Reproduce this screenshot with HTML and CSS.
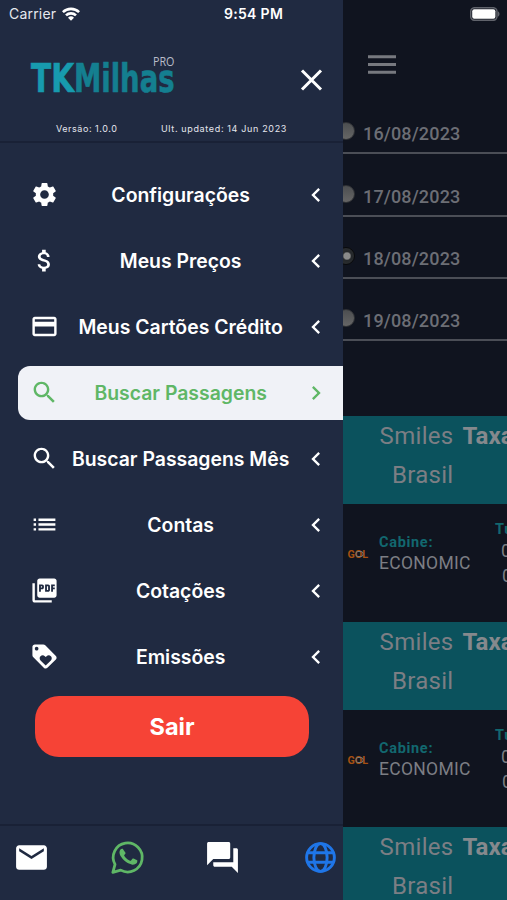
FILE: index.html
```html
<!DOCTYPE html>
<html lang="pt-BR">
<head>
<meta charset="utf-8">
<title>TKMilhas PRO</title>
<link rel="stylesheet" href="styles.css">
</head>
<body>
<div class="phone">
  <div class="status">
    <span class="carrier">Carrier</span>
    <svg class="wifi" viewBox="0 0 18 14"><g fill="none" stroke="#fff" stroke-width="2.6"><path d="M.9 5.2a11.5 11.5 0 0 1 16.2 0"/><path d="M4 8.4a7.1 7.1 0 0 1 10 0"/></g><path fill="#fff" d="M9 13.8 6 10.7a4.3 4.3 0 0 1 6 0z"/></svg>
    <span class="time">9:54 PM</span>
    <svg class="battery" viewBox="0 0 30 14"><rect x=".7" y=".7" width="26.3" height="12.6" rx="4" fill="none" stroke="#60636b" stroke-width="1.5"/><path d="M28 4.5c2 .6 2 4.400 0 5z" fill="#60636b"/><rect x="2.200" y="2.200" width="23.200" height="9.600" rx="2" fill="#fff"/></svg>
  </div>

  <aside class="drawer">
    <header class="head">
      <div class="brand">
        <svg class="logo" viewBox="0 0 146 44">
          <text class="logo-tk" x="0" y="39.700" textLength="43" lengthAdjust="spacingAndGlyphs">TK</text>
          <text class="logo-milhas" x="43" y="39.700" textLength="100.500" lengthAdjust="spacingAndGlyphs">Milhas</text>
          <text class="logo-pro" x="122" y="14.300" textLength="21.500" lengthAdjust="spacingAndGlyphs">PRO</text>
        </svg>
        <svg class="close" viewBox="0 0 24 24"><path d="M3 2.500l19 19M22 2.500l-19 19"/></svg>
      </div>
      <div class="version"><span class="v1">Versão: 1.0.0</span><span class="v2">Ult. updated: 14 Jun 2023</span></div>
    </header>

    <nav class="menu">
      <a class="item"><svg class="icon" viewBox="0 0 24 24"><path d="M19.140 12.940c.04-.3.060-.610.060-.940 0-.320-.020-.640-.070-.940l2.030-1.580c.180-.140.230-.410.120-.610l-1.920-3.320c-.120-.220-.370-.290-.590-.220l-2.390.960c-.500-.380-1.030-.700-1.620-.940l-.360-2.540c-.040-.240-.240-.410-.480-.410h-3.840c-.240 0-.430.170-.470.410l-.360 2.540c-.590.240-1.130.570-1.620.940l-2.390-.960c-.220-.080-.470 0-.590.220L2.740 8.870c-.120.210-.080.470.120.610l2.030 1.580c-.050.300-.090.630-.090.940s.020.640.070.940l-2.030 1.580c-.180.140-.230.410-.120.610l1.920 3.320c.120.220.370.290.590.220l2.390-.960c.500.380 1.030.700 1.620.940l.360 2.540c.050.240.240.410.480.410h3.840c.240 0 .440-.170.470-.410l.360-2.540c.590-.240 1.130-.560 1.620-.940l2.390.960c.220.080.470 0 .590-.220l1.920-3.320c.120-.220.070-.470-.120-.610l-2.010-1.580zM12 15.600c-1.980 0-3.600-1.620-3.600-3.600s1.620-3.600 3.600-3.600 3.600 1.620 3.600 3.600-1.620 3.600-3.600 3.600z"/></svg><span>Configurações</span><svg class="chev" viewBox="0 0 24 24"><path d="M15.410 7.410L14 6l-6 6 6 6 1.410-1.410L10.830 12z"/></svg></a>
      <a class="item"><svg class="icon" viewBox="0 0 24 24"><path d="M11.800 10.900c-2.270-.59-3-1.200-3-2.150 0-1.090 1.010-1.850 2.700-1.850 1.780 0 2.440.85 2.500 2.100h2.210c-.07-1.720-1.120-3.300-3.210-3.810V3h-3v2.160c-1.940.42-3.500 1.680-3.500 3.610 0 2.310 1.910 3.460 4.700 4.130 2.500.6 3 1.480 3 2.410 0 .69-.49 1.790-2.700 1.790-2.060 0-2.870-.92-2.980-2.100h-2.200c.12 2.190 1.760 3.420 3.680 3.830V21h3v-2.150c1.950-.37 3.500-1.500 3.500-3.550 0-2.840-2.430-3.810-4.700-4.400z"/></svg><span>Meus Preços</span><svg class="chev" viewBox="0 0 24 24"><path d="M15.410 7.410L14 6l-6 6 6 6 1.410-1.410L10.830 12z"/></svg></a>
      <a class="item"><svg class="icon" viewBox="0 0 24 24"><path d="M20 4H4c-1.110 0-1.990.89-1.990 2L2 18c0 1.110.89 2 2 2h16c1.110 0 2-.89 2-2V6c0-1.110-.89-2-2-2zm0 14H4v-6h16v6zm0-10H4V6h16v2z"/></svg><span>Meus Cartões Crédito</span><svg class="chev" viewBox="0 0 24 24"><path d="M15.410 7.410L14 6l-6 6 6 6 1.410-1.410L10.830 12z"/></svg></a>
      <a class="item active"><svg class="icon" viewBox="0 0 24 24"><path d="M15.500 14h-.79l-.28-.27C15.410 12.590 16 11.110 16 9.500 16 5.910 13.090 3 9.500 3S3 5.910 3 9.500 5.910 16 9.500 16c1.610 0 3.090-.59 4.230-1.570l.27.28v.79l5 4.990L20.490 19l-4.990-5zm-6 0C7.010 14 5 11.990 5 9.500S7.010 5 9.500 5 14 7.010 14 9.500 11.990 14 9.500 14z"/></svg><span>Buscar Passagens</span><svg class="chev" viewBox="0 0 24 24"><path d="M10 6L8.590 7.410 13.170 12l-4.580 4.590L10 18l6-6z"/></svg></a>
      <a class="item"><svg class="icon" viewBox="0 0 24 24"><path d="M15.500 14h-.79l-.28-.27C15.410 12.590 16 11.110 16 9.500 16 5.910 13.090 3 9.500 3S3 5.910 3 9.500 5.910 16 9.500 16c1.610 0 3.090-.59 4.230-1.570l.27.28v.79l5 4.990L20.490 19l-4.990-5zm-6 0C7.010 14 5 11.990 5 9.500S7.010 5 9.500 5 14 7.010 14 9.500 11.990 14 9.500 14z"/></svg><span>Buscar Passagens Mês</span><svg class="chev" viewBox="0 0 24 24"><path d="M15.410 7.410L14 6l-6 6 6 6 1.410-1.410L10.830 12z"/></svg></a>
      <a class="item"><svg class="icon" viewBox="0 0 24 24"><path d="M3 13h2v-2H3v2zm0 4h2v-2H3v2zm0-8h2V7H3v2zm4 4h14v-2H7v2zm0 4h14v-2H7v2zM7 7v2h14V7H7z"/></svg><span>Contas</span><svg class="chev" viewBox="0 0 24 24"><path d="M15.410 7.410L14 6l-6 6 6 6 1.410-1.410L10.830 12z"/></svg></a>
      <a class="item"><svg class="icon" viewBox="0 0 24 24"><path d="M20 2H8c-1.100 0-2 .9-2 2v12c0 1.100.9 2 2 2h12c1.100 0 2-.9 2-2V4c0-1.100-.9-2-2-2zm-8.500 7.500c0 .83-.67 1.500-1.500 1.500H9v2H7.500V7H10c.83 0 1.500.67 1.500 1.500v1zm5 2c0 .83-.67 1.500-1.500 1.500h-2.500V7H15c.83 0 1.500.67 1.500 1.500v3zm4-3H19v1h1.500V11H19v2h-1.500V7h3v1.500zM9 9.500h1v-1H9v1zM4 6H2v14c0 1.100.9 2 2 2h14v-2H4V6zm10 5.500h1v-3h-1v3z"/></svg><span>Cotações</span><svg class="chev" viewBox="0 0 24 24"><path d="M15.410 7.410L14 6l-6 6 6 6 1.410-1.410L10.830 12z"/></svg></a>
      <a class="item"><svg class="icon" viewBox="0 0 24 24"><path d="M21.410 11.580l-9-9C12.050 2.220 11.550 2 11 2H4c-1.100 0-2 .9-2 2v7c0 .55.220 1.050.590 1.420l9 9c.360.360.860.580 1.410.580s1.050-.220 1.410-.590l7-7c.370-.360.590-.860.590-1.410s-.230-1.060-.590-1.420zM5.500 7C4.670 7 4 6.330 4 5.500S4.670 4 5.500 4 7 4.670 7 5.500 6.330 7 5.500 7zm11.770 8.270L13 19.540l-4.270-4.270C8.280 14.810 8 14.190 8 13.500c0-1.380 1.120-2.500 2.500-2.500.69 0 1.320.28 1.770.74l.73.72.73-.73c.450-.450 1.080-.730 1.770-.730 1.380 0 2.500 1.120 2.500 2.500 0 .69-.280 1.320-.730 1.770z"/></svg><span>Emissões</span><svg class="chev" viewBox="0 0 24 24"><path d="M15.410 7.410L14 6l-6 6 6 6 1.410-1.410L10.830 12z"/></svg></a>
    </nav>
    <button class="exit">Sair</button>

    <footer class="foot">
      <svg viewBox="0 0 24 24" fill="#fff"><path d="M20 4H4c-1.100 0-1.990.9-1.990 2L2 18c0 1.100.9 2 2 2h16c1.100 0 2-.9 2-2V6c0-1.100-.9-2-2-2zm0 4l-8 5-8-5V6l8 5 8-5v2z"/></svg>
      <svg viewBox="0 0 24 24"><path d="M2.500 21.600l1.400-5.100a9.400 9.400 0 1 1 3.700 3.700z" fill="none" stroke="#5fb766" stroke-width="1.800" stroke-linejoin="round"/><path fill="#5fb766" d="M9.300 6.900c-.3-.5-.5-.5-.8-.5-.9 0-1.700 1-1.700 2.300 0 1.400 1 2.700 1.200 2.900.1.200 2 3.100 4.900 4.300 2.400 1 2.900.8 3.400.7.500 0 1.700-.7 1.900-1.300.2-.7.200-1.200.2-1.300-.1-.2-.3-.3-2.500-1.300-.3-.1-.5-.1-.7.100l-.9 1.200c-.2.200-.4.200-.7.100-2.200-1-3.400-2.600-3.700-3.200-.2-.3 0-.5.800-1.500.1-.2 0-.4 0-.5z"/></svg>
      <svg viewBox="0 0 24 24" fill="#fff"><path d="M21 6h-2v9H6v2c0 .55.45 1 1 1h11l4 4V7c0-.55-.45-1-1-1zm-4 6V3c0-.55-.45-1-1-1H3c-.55 0-1 .45-1 1v14l4-4h10c.55 0 1-.45 1-1z"/></svg>
      <svg viewBox="0 0 24 24" fill="none" stroke="#1f76e8" stroke-width="1.900"><circle cx="12" cy="12" r="9"/><ellipse cx="12" cy="12" rx="4.300" ry="9"/><path d="M3.800 8.900h16.400M3.800 15.100h16.400"/></svg>
    </footer>
  </aside>

  <main class="page">
    <svg class="burger" viewBox="0 0 28 20"><path d="M0 1.700h28M0 9.500h28M0 17.300h28"/></svg>
    <ul class="dates">
      <li><i class="radio"></i>16/08/2023</li>
      <li><i class="radio"></i>17/08/2023</li>
      <li><i class="radio on"></i>18/08/2023</li>
      <li><i class="radio"></i>19/08/2023</li>
    </ul>
    <section class="flight">
      <div class="banner"><div class="airline">Smiles<br>Brasil</div><b>Taxa</b></div>
      <div class="detail"><svg class="gol" viewBox="0 0 36 12"><text x="4.500" y="10" textLength="20.500" lengthAdjust="spacingAndGlyphs">GOL</text><rect x="13" y="3.500" width="7" height="5" rx="2"/></svg><div class="cabin"><b>Cabine:</b><span>ECONOMIC</span></div><div class="leg"><b>Tu</b><span>0</span><span>0</span></div></div>
    </section>
    <section class="flight">
      <div class="banner"><div class="airline">Smiles<br>Brasil</div><b>Taxa</b></div>
      <div class="detail"><svg class="gol" viewBox="0 0 36 12"><text x="4.500" y="10" textLength="20.500" lengthAdjust="spacingAndGlyphs">GOL</text><rect x="13" y="3.500" width="7" height="5" rx="2"/></svg><div class="cabin"><b>Cabine:</b><span>ECONOMIC</span></div><div class="leg"><b>Tu</b><span>0</span><span>0</span></div></div>
    </section>
    <section class="flight">
      <div class="banner"><div class="airline">Smiles<br>Brasil</div><b>Taxa</b></div>
    </section>
  </main>
</div>
</body>
</html>
```
FILE: styles.css
```css
* { box-sizing: border-box; }
body { margin: 0; background: #10141f; }
svg { display: block; flex: none; }
.phone {
  position: relative;
  display: grid;
  grid-template-columns: 343px 164px;
  width: 507px;
  height: 900px;
  overflow: hidden;
  font-family: Inter, "Liberation Sans", sans-serif;
  color: #fff;
}

.status {
  position: absolute;
  inset: 0 0 auto 0;
  z-index: 2;
  display: flex;
  align-items: center;
  height: 27px;
  padding: 0 7px 0 9px;
  font-size: 14px;
}
.carrier { width: 53px; letter-spacing: .2px; color: #e6e8ee; }
.wifi { width: 18px; height: 14px; }
.time { margin-left: 144px; font-weight: 600; letter-spacing: .3px; white-space: nowrap; }
.battery { width: 30px; height: 14px; margin-left: auto; }

.drawer {
  display: flex;
  flex-direction: column;
  height: 900px;
  background: #202a41;
}
.head {
  height: 143px;
  padding-top: 52px;
  border-bottom: 2px solid #192136;
}
.brand { display: flex; justify-content: space-between; padding: 0 20px 0 31px; height: 66px; }
.logo { width: 146px; height: 44px; overflow: visible; }
.logo-tk, .logo-milhas { font-family: "DejaVu Sans", sans-serif; font-size: 38.5px; font-weight: 700; stroke-width: .7px; }
.logo-tk { fill: #179bae; stroke: #179bae; }
.logo-milhas { fill: #147f90; stroke: #147f90; }
.logo-pro { font-family: "Open Sans", sans-serif; font-size: 12px; font-weight: 500; fill: #b9bdc9; }
.close { width: 24px; height: 24px; margin-top: 16px; fill: none; stroke: #fff; stroke-width: 3; }
.version { display: flex; font-size: 9px; line-height: 21px; padding-left: 56px; white-space: nowrap; color: #e4e6ed; }
.v1 { width: 105px; letter-spacing: .55px; }
.v2 { letter-spacing: .65px; }

.menu { display: flex; flex-direction: column; gap: 12px; margin-top: 25px; padding-left: 18px; }
.item {
  display: flex;
  align-items: center;
  height: 54px;
  padding: 0 13px 0 12.3px;
  border-radius: 12px 0 0 12px;
  fill: currentColor;
}
.item span { flex: 1; text-align: center; font-size: 19.4px; font-weight: 600; white-space: nowrap; margin: 0 -10px; }
.icon { width: 29px; height: 29px; margin-bottom: 1px; }
.chev { width: 28px; height: 28px; }
.active { background: #f0f2f7; color: #5fb766; }
.exit {
  width: 274px;
  height: 61px;
  margin: 12px 0 0 35px;
  border: 0;
  border-radius: 24px;
  background: #f64336;
  color: #fff;
  font: 700 23.5px Inter, sans-serif;
}
.foot {
  display: grid;
  grid-template-columns: 95.5px 95.5px 97.5px 37px;
  height: 76px;
  margin-top: auto;
  padding: 13px 4px 0 13px;
  border-top: 2px solid #192136;
}
.foot svg { width: 37px; height: 37px; }

.page {
  height: 900px;
  overflow: hidden;
  background: #10141f;
  font-family: Roboto, sans-serif;
  color: #7c7e84;
}
.burger { width: 28px; height: 20px; margin: 55px 0 0 25px; stroke: #77797f; stroke-width: 3; }
.dates { list-style: none; margin: 17px 0 75px; padding: 0; }
.dates li {
  display: flex;
  align-items: flex-end;
  height: 62.25px;
  padding-bottom: 8px;
  border-bottom: 2px solid #4b4e56;
  font-size: 18px;
  line-height: 21px;
  font-weight: 500;
  letter-spacing: .15px;
  color: #6c6e75;
}
.radio {
  flex: none;
  width: 18px;
  height: 18px;
  margin: 0 8px 4px -6px;
  border-radius: 50%;
  background: linear-gradient(#4c4e50, #666);
  border: 1px solid #303236;
}
.radio.on { background: radial-gradient(circle at 9px 8px, #8a8a8a 3px, #24272a 4.5px, #303335); border-color: #090a0c; }
.flight { height: 205.5px; }
.banner {
  display: flex;
  height: 88px;
  padding-top: 1px;
  background: #0b525d;
  font-size: 24px;
  line-height: 39px;
  white-space: nowrap;
}
.airline { flex: none; width: 110.5px; text-align: right; letter-spacing: .3px; }
.banner b { margin-left: 9px; font-weight: 700; color: #85898d; }
.detail { display: flex; white-space: nowrap; height: 117px; }
.gol { width: 36px; height: 12px; margin-top: 44px; }
.gol text { font: 700 10.5px Roboto, sans-serif; fill: #a65011; }
.gol rect { fill: none; stroke: #777; stroke-width: 1; }
.cabin { flex: none; width: 116px; padding-top: 28px; }
.cabin b, .leg b { display: block; font-size: 14.5px; line-height: 21px; font-weight: 700; letter-spacing: .7px; color: #12686f; }
.cabin span { display: block; font-size: 17.5px; line-height: 21px; letter-spacing: .3px; }
.leg { flex: none; padding-top: 15px; }
.leg b { margin-bottom: -2px; }
.leg span { display: block; font-size: 18px; line-height: 25px; padding-left: 6px; }
.leg span + span { padding-left: 7px; }
```
